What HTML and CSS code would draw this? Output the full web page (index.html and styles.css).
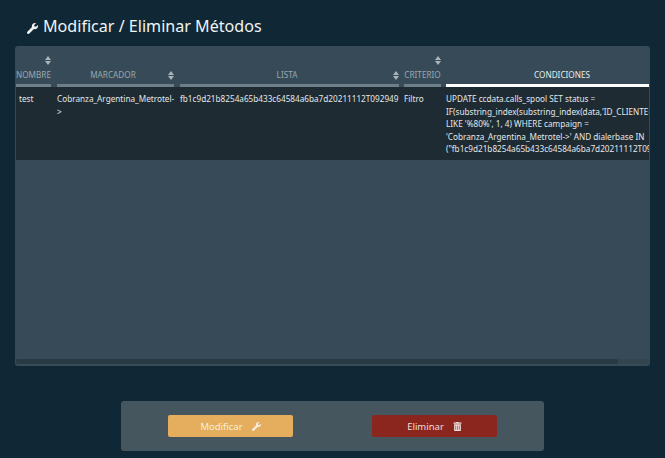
FILE: index.html
```html
<!DOCTYPE html>
<html lang="es">
<head>
    <meta charset="UTF-8">
    <meta name="viewport" content="width=device-width, initial-scale=1.0">
    <title>Modificar / Eliminar Métodos</title>
    <link rel="stylesheet" href="styles.css">
</head>
<body>
    <svg class="icon-defs" width="0" height="0" aria-hidden="true">
        <symbol id="icon-wrench" viewBox="0 0 512 512">
            <path d="M507.7 109.1c-2.2-9-13.5-12.1-20.1-5.5l-74.4 74.4-67.9-11.3-11.3-67.9 74.4-74.4c6.6-6.6 3.4-17.9-5.7-20.2-47.4-11.7-99.6.9-136.6 37.9-39.6 39.6-50.6 97.1-34.1 147.2L18.7 402.8c-25 25-25 65.5 0 90.5s65.5 25 90.5 0l213.2-213.2c50.1 16.7 107.5 5.7 147.4-34.2 37.1-37.1 49.7-89.3 37.9-136.8z"/>
        </symbol>
        <symbol id="icon-trash" viewBox="0 0 448 512">
            <path d="M32 464a48 48 0 0 0 48 48h288a48 48 0 0 0 48-48V128H32zm272-256a16 16 0 0 1 32 0v224a16 16 0 0 1-32 0zm-96 0a16 16 0 0 1 32 0v224a16 16 0 0 1-32 0zm-96 0a16 16 0 0 1 32 0v224a16 16 0 0 1-32 0zM432 32H312l-9-19a24 24 0 0 0-22-13H167a24 24 0 0 0-21 13l-9 19H16A16 16 0 0 0 0 48v32a16 16 0 0 0 16 16h416a16 16 0 0 0 16-16V48a16 16 0 0 0-16-16z"/>
        </symbol>
    </svg>

    <h1 class="page-title">
        <svg class="title-icon"><use href="#icon-wrench"></use></svg>
        Modificar / Eliminar Métodos
    </h1>

    <div class="table-panel">
        <div class="table-scroll">
            <table class="methods-table">
                <thead>
                    <tr>
                        <th class="col-nombre">
                            <span class="sort sort-top"></span>
                            <span class="th-label">NOMBRE</span>
                        </th>
                        <th class="col-marcador">
                            <span class="th-row"><span class="th-label">MARCADOR</span><span class="sort"></span></span>
                        </th>
                        <th class="col-lista">
                            <span class="th-row"><span class="th-label">LISTA</span><span class="sort"></span></span>
                        </th>
                        <th class="col-criterio">
                            <span class="sort sort-top"></span>
                            <span class="th-label">CRITERIO</span>
                        </th>
                        <th class="col-condiciones active">
                            <span class="th-label">CONDICIONES</span>
                        </th>
                    </tr>
                </thead>
                <tbody>
                    <tr>
                        <td class="cell-name">test</td>
                        <td>Cobranza_Argentina_Metrotel-&gt;</td>
                        <td>fb1c9d21b8254a65b433c64584a6ba7d20211112T092949</td>
                        <td class="cell-tight">Filtro</td>
                        <td class="cell-tight">UPDATE ccdata.calls_spool SET status = IF(substring_index(substring_index(data,'ID_CLIENTE=',-1),'&amp;',1) LIKE '%80%', 1, 4) WHERE campaign = 'Cobranza_Argentina_Metrotel-&gt;' AND dialerbase IN ("fb1c9d21b8254a65b433c64584a6ba7d20211112T092949")</td>
                    </tr>
                </tbody>
            </table>
        </div>
        <div class="scrollbar"><div class="scrollbar-thumb"></div></div>
    </div>

    <div class="actions">
        <button class="btn btn-modify">Modificar <svg class="btn-icon"><use href="#icon-wrench"></use></svg></button>
        <button class="btn btn-delete">Eliminar <svg class="btn-icon"><use href="#icon-trash"></use></svg></button>
    </div>
</body>
</html>
```

FILE: styles.css
```css
html, body {
    height: 100%;
}
body {
    margin: 0;
    padding: 17px 15px 0;
    box-sizing: border-box;
    overflow: hidden;
    font-family: "Noto Sans", Arial, sans-serif;
    background-color: #102835;
    color: #e8eced;
}
.icon-defs {
    display: block;
}
.page-title {
    display: flex;
    align-items: center;
    gap: 5px;
    margin: 0 0 10px 12px;
    height: 19px;
    font-size: 16.1px;
    font-weight: 400;
    line-height: 19px;
    color: #f1f4f5;
}
.title-icon {
    width: 11px;
    height: 11px;
    margin-top: 3px;
    fill: #f1f4f5;
}
.table-panel {
    display: flex;
    flex-direction: column;
    width: 635px;
    height: 320px;
    box-sizing: border-box;
    padding: 0 1px 1px;
    background-color: #364b57;
    border-radius: 3px;
    overflow: hidden;
}
.table-scroll {
    flex: 1;
    overflow: hidden;
}
.methods-table {
    table-layout: fixed;
    width: 662px;
    border-collapse: separate;
    border-spacing: 0;
    font-size: 8.2px;
    line-height: 12.5px;
}
.col-nombre { width: 35px; }
.col-marcador { width: 123px; }
.col-lista { width: 225px; }
.col-criterio { width: 42px; }
.col-condiciones { width: 237px; }

.methods-table th {
    box-sizing: border-box;
    height: 41px;
    padding: 0;
    vertical-align: bottom;
    font-weight: 400;
    text-align: center;
    color: #9aa8af;
}
.methods-table th + th {
    border-left: 6px solid transparent;
}
.methods-table th.col-criterio,
.methods-table th.col-condiciones {
    border-left-width: 5px;
}
/* bar under each header */
.methods-table th::after {
    content: "";
    display: block;
    height: 3px;
    margin-top: 3px;
    background-color: #6d7f89;
}
.methods-table th.active {
    color: #e8eced;
}
.methods-table th.active::after {
    background-color: #fff;
}
.th-row {
    display: flex;
    justify-content: center;
    position: relative;
    padding-right: 5px;
}
.th-label {
    display: block;
}
.sort {
    display: block;
    position: relative;
    width: 6px;
    height: 9px;
}
.sort::before,
.sort::after {
    content: "";
    position: absolute;
    left: 0;
    border-left: 3px solid transparent;
    border-right: 3px solid transparent;
}
.sort::before {
    top: 0;
    border-bottom: 4px solid #a9b5bb;
}
.sort::after {
    bottom: 0;
    border-top: 4px solid #a9b5bb;
}
.th-row .sort {
    position: absolute;
    right: 0;
    top: 2px;
}
.sort-top {
    margin: 0 0 4px auto;
}
.methods-table td {
    height: 73px;
    box-sizing: border-box;
    padding: 6px 0 0 6px;
    vertical-align: top;
    background-color: #1e2b33;
    color: #e3e8ea;
}
.methods-table td.cell-name {
    padding-left: 3px;
}
.methods-table td.cell-tight {
    padding-left: 5px;
}
.scrollbar {
    height: 5px;
    margin-bottom: 1px;
    background-color: #33454f;
    border-radius: 2px;
}
.scrollbar-thumb {
    width: 602px;
    height: 100%;
    background-color: #2a3a44;
    border-radius: 2px;
}
.actions {
    display: flex;
    justify-content: space-between;
    width: 423px;
    height: 50px;
    box-sizing: border-box;
    margin: 35px 0 0 106px;
    padding: 14px 47px 0;
    background-color: #45565f;
    border-radius: 3px;
}
.btn {
    display: flex;
    align-items: center;
    justify-content: center;
    gap: 9px;
    width: 125px;
    height: 22px;
    padding: 0;
    border: none;
    border-radius: 2px;
    font-family: inherit;
    font-size: 9.5px;
}
.btn-modify {
    background-color: #e5ad5e;
    color: #f5eddd;
}
.btn-delete {
    background-color: #8b261f;
    color: #f0dfdc;
}
.btn-icon {
    width: 9px;
    height: 9px;
    fill: currentColor;
}
```
